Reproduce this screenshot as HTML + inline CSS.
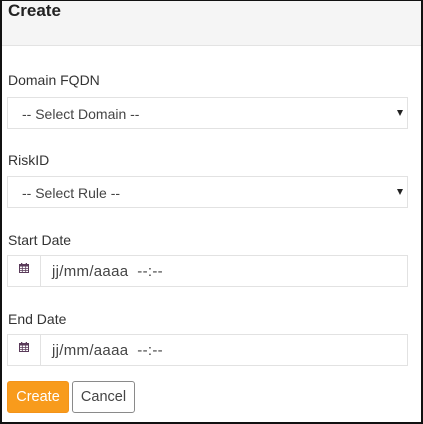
<!DOCTYPE html>
<html><head><style>
*{box-sizing:border-box;margin:0;padding:0}
body{width:423px;height:424px;background:#fff;font-family:"Liberation Sans",sans-serif;font-size:14px;color:#333;position:relative;overflow:hidden}
.frame{position:absolute;left:0;top:0;width:423px;height:424px;border:2px solid #111;border-top-width:1px}
.hdr{position:absolute;left:2px;top:1px;width:419px;height:45px;background:#f5f5f5;border-bottom:1px solid #e3e3e3}
.hdr span{position:absolute;left:6px;top:0px;font-size:17px;font-weight:bold;color:#222}
.lbl{position:absolute;left:8px;font-size:14px;color:#333}
.sel{position:absolute;left:7px;width:401px;height:32px;border:1px solid #e2e2e2;background:#fff}
.sel span{position:absolute;left:14px;top:8px;color:#444}
.sel i{position:absolute;right:4px;top:12px;width:0;height:0;border-left:3px solid transparent;border-right:3px solid transparent;border-top:6px solid #222}
.add{position:absolute;left:0;top:0;width:33px;height:30px;border-right:1px solid #e2e2e2}
.dt span{left:44px;top:7px;font-size:15px;letter-spacing:0.3px}
.btn{position:absolute;top:381px;height:32px;border-radius:3px;font-size:14.5px;text-align:center;line-height:30px}
</style></head><body>
<div class="hdr"><span>Create</span></div>
<div class="lbl" style="top:72px">Domain FQDN</div>
<div class="sel" style="top:97px"><span>-- Select Domain --</span><i></i></div>
<div class="lbl" style="top:152px">RiskID</div>
<div class="sel" style="top:176px"><span>-- Select Rule --</span><i></i></div>
<div class="lbl" style="top:232px">Start Date</div>
<div class="sel dt" style="top:255px"><div class="add"><svg style="position:absolute;left:11px;top:7px" width="10" height="10" viewBox="0 0 10 10"><rect x="0.5" y="1.5" width="9" height="8" fill="#fff" stroke="#5a3b5a"/><rect x="0" y="1" width="10" height="2.5" fill="#5a3b5a"/><path d="M3.3 3.5V9.5M6.7 3.5V9.5M0.5 5.5H9.5M0.5 7.5H9.5" stroke="#5a3b5a" stroke-width="0.8"/><rect x="2" y="0" width="1.3" height="2" fill="#5a3b5a"/><rect x="6.7" y="0" width="1.3" height="2" fill="#5a3b5a"/></svg></div><span>jj/mm/aaaa &nbsp;--:--</span></div>
<div class="lbl" style="top:311px">End Date</div>
<div class="sel dt" style="top:334px"><div class="add"><svg style="position:absolute;left:11px;top:7px" width="10" height="10" viewBox="0 0 10 10"><rect x="0.5" y="1.5" width="9" height="8" fill="#fff" stroke="#5a3b5a"/><rect x="0" y="1" width="10" height="2.5" fill="#5a3b5a"/><path d="M3.3 3.5V9.5M6.7 3.5V9.5M0.5 5.5H9.5M0.5 7.5H9.5" stroke="#5a3b5a" stroke-width="0.8"/><rect x="2" y="0" width="1.3" height="2" fill="#5a3b5a"/><rect x="6.7" y="0" width="1.3" height="2" fill="#5a3b5a"/></svg></div><span>jj/mm/aaaa &nbsp;--:--</span></div>
<div class="btn" style="left:7px;width:62px;background:#f89b1c;color:#fff;border:1px solid #f3931a">Create</div>
<div class="btn" style="left:72px;width:63px;background:#fff;color:#444;border:1px solid #8a8a8a">Cancel</div>
<div class="frame"></div>
</body></html>
